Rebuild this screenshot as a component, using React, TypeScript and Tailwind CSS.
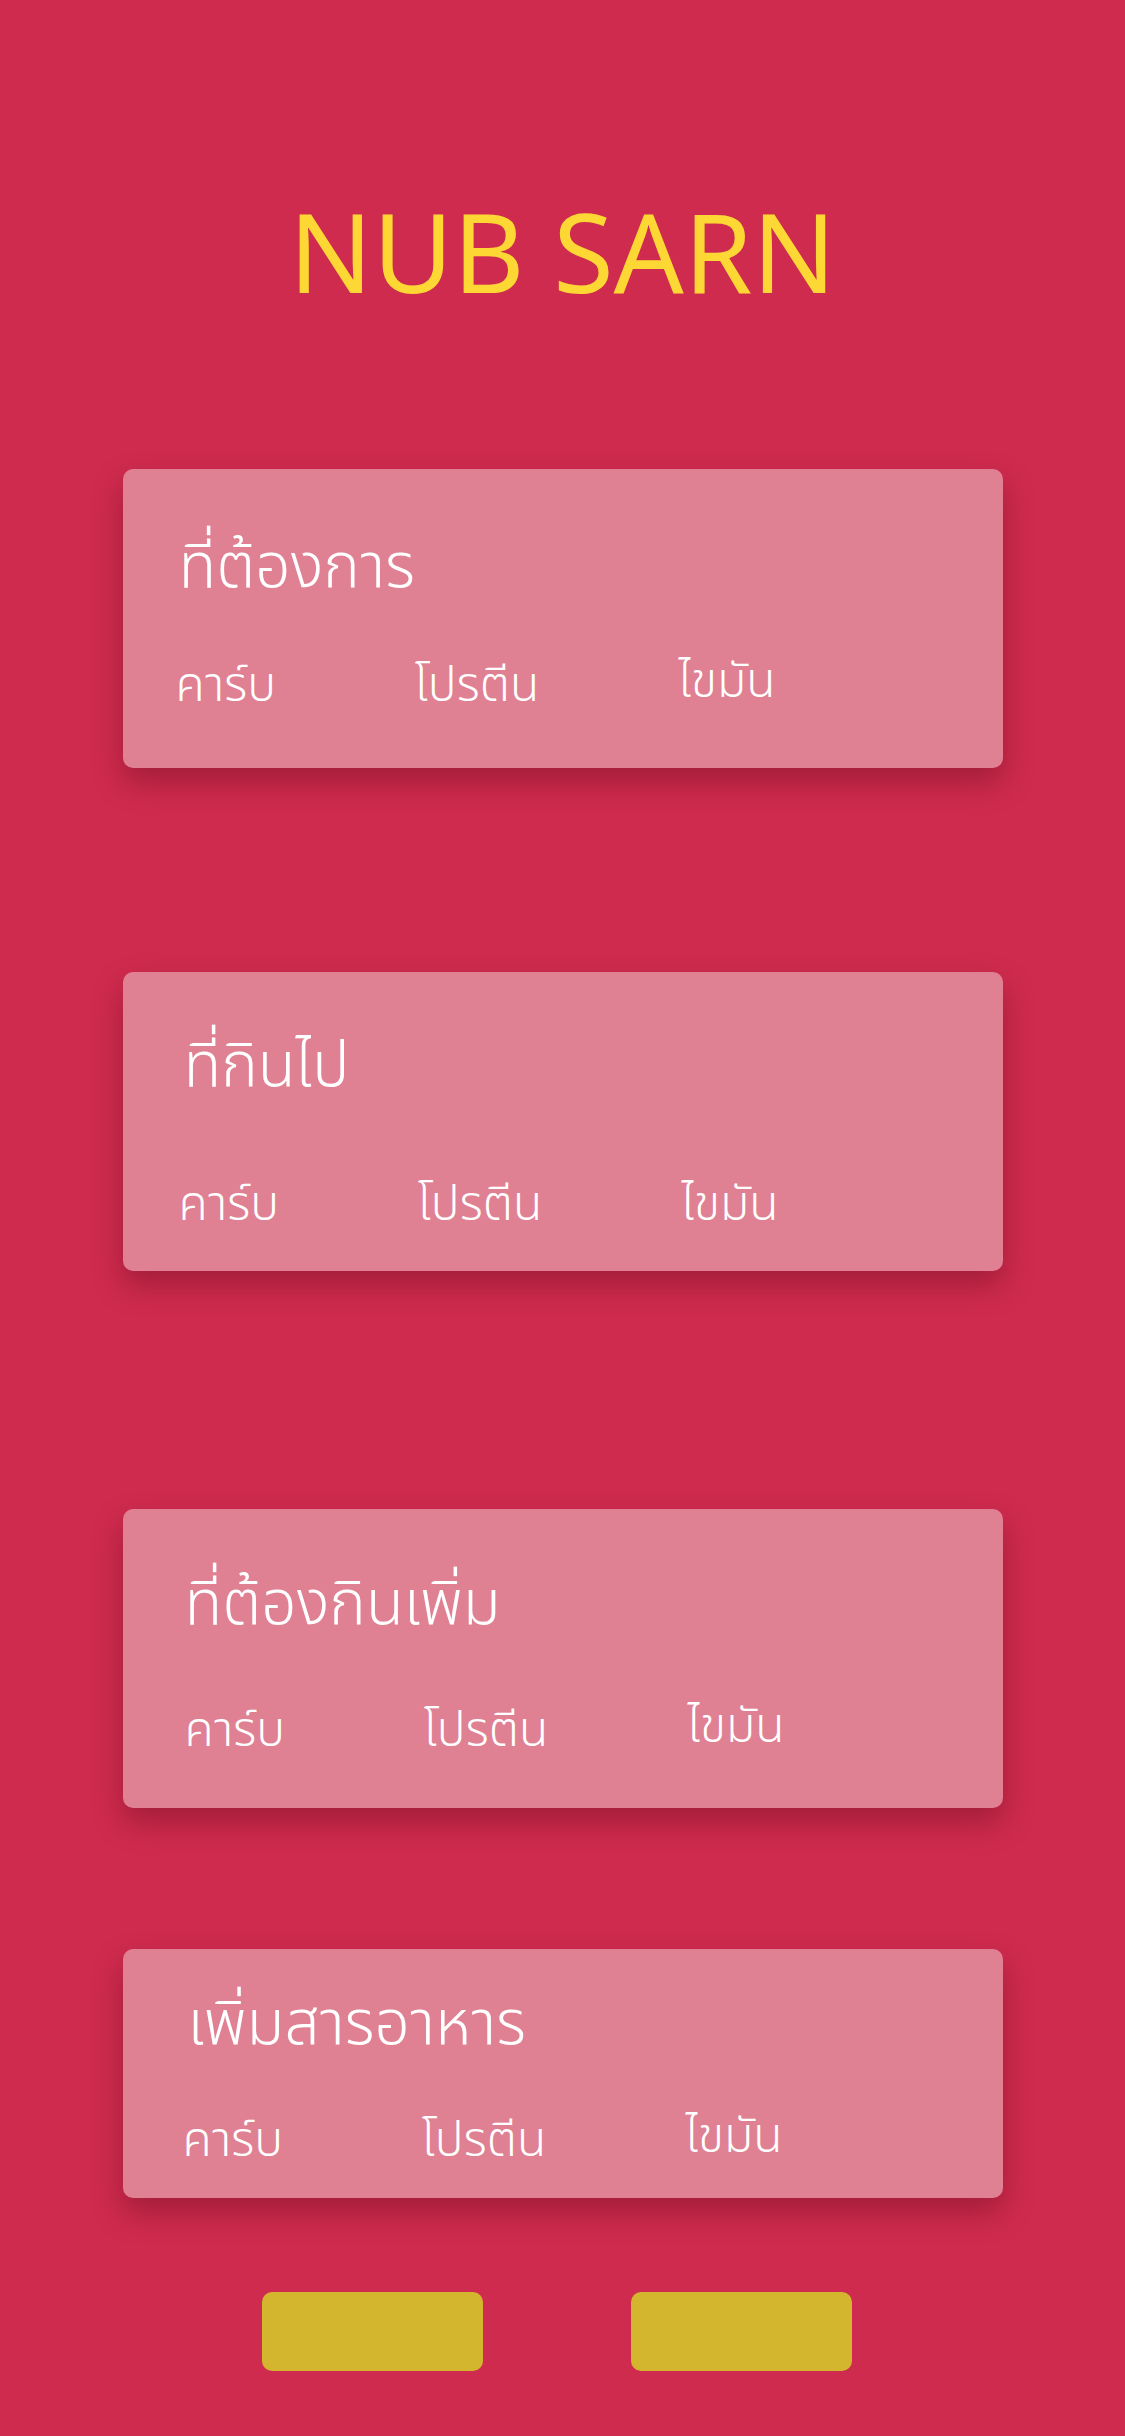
const cards = [
  { title: "ที่ต้องการ", box: "mt-[149px] h-[299px] pt-[59px]", titlePad: "pl-[56px]", row: "mt-[55px] pl-[53px]", fatUp: true },
  { title: "ที่กินไป", box: "mt-[204px] h-[299px] pt-[55px]", titlePad: "pl-[61px]", row: "mt-[75px] pl-[56px]", fatUp: false },
  { title: "ที่ต้องกินเพิ่ม", box: "mt-[238px] h-[299px] pt-[56px]", titlePad: "pl-[62px]", row: "mt-[63px] pl-[62px]", fatUp: true },
  { title: "เพิ่มสารอาหาร", box: "mt-[141px] h-[249px] pt-[36px]", titlePad: "pl-[65px]", row: "mt-[53px] pl-[60px]", fatUp: true },
];

function NutrientRow({ row, fatUp }: { row: string; fatUp: boolean }) {
  return (
    <div className={`flex items-baseline text-[48px] leading-[60px] font-light text-white ${row}`}>
      <span className="w-[239px]">คาร์บ</span>
      <span className="w-[264px]">โปรตีน</span>
      <span className={fatUp ? "-translate-y-[4px]" : ""}>ไขมัน</span>
    </div>
  );
}

export default function App() {
  return (
    <div
      className="flex min-h-[2436px] w-full flex-col items-center bg-[#cf2b4e] pb-[60px]"
      style={{ fontFamily: '"Noto Sans", "Noto Sans Thai", "Open Sans", sans-serif' }}
    >
      <h1 className="mt-[180px] text-[110px] leading-[140px] text-[#fdd835]">NUB SARN</h1>

      {cards.map((c) => (
        <div
          key={c.title}
          className={`flex w-[880px] flex-col rounded-[10px] bg-[#e08093] shadow-[0_14px_30px_rgba(80,0,20,0.35)] ${c.box}`}
        >
          <div className={`text-[62px] leading-[70px] font-light text-white ${c.titlePad}`}>{c.title}</div>
          <NutrientRow row={c.row} fatUp={c.fatUp} />
        </div>
      ))}

      <div className="mt-[94px] flex gap-[148px] pr-[12px]">
        <button className="h-[79px] w-[221px] rounded-[10px] bg-[#d3b62e]" />
        <button className="h-[79px] w-[221px] rounded-[10px] bg-[#d3b62e]" />
      </div>
    </div>
  );
}
